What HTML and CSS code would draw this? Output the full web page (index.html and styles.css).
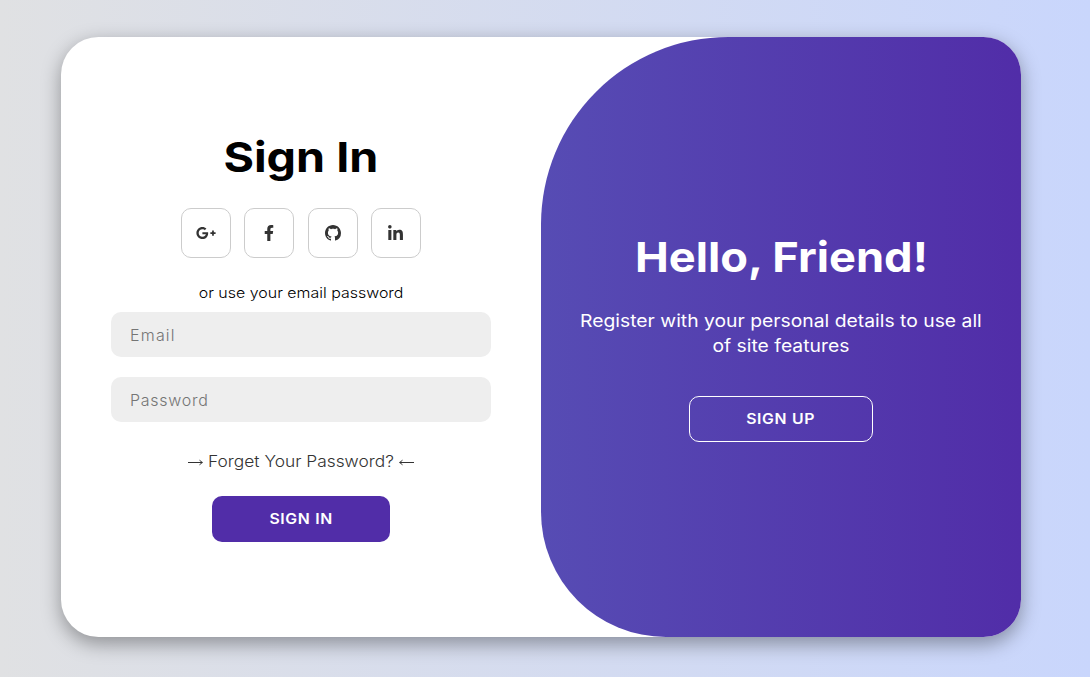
FILE: index.html
```html
<!DOCTYPE html>
<html lang="en">
<head>
<meta charset="utf-8">
<title>Sign In</title>
<link rel="stylesheet" href="styles.css">
</head>
<body>
<main class="card">
  <form class="sign-in">
    <h1 class="title">Sign In</h1>
    <div class="socials">
      <a class="social" aria-label="Google Plus"><svg width="20" height="16" viewBox="0 0 640 512"><path d="M386.061 228.496c1.834 9.692 3.143 19.384 3.143 31.956C389.204 370.205 315.599 448 204.8 448c-106.084 0-192-85.915-192-192s85.916-192 192-192c51.864 0 95.083 18.859 128.611 50.292l-52.126 50.03c-14.145-13.621-39.028-29.599-76.485-29.599-65.484 0-118.92 54.221-118.92 121.277 0 67.056 53.436 121.277 118.92 121.277 75.961 0 104.513-54.745 108.965-82.773H204.8v-66.009h181.261zm185.406 6.437V179.2h-56.001v55.733h-55.733v56.001h55.733v55.733h56.001v-55.733H627.2v-56.001h-55.733z"/></svg></a>
      <a class="social" aria-label="Facebook"><svg width="10" height="16" viewBox="0 0 320 512"><path d="M279.14 288l14.22-92.66h-88.91v-60.13c0-25.35 12.42-50.06 52.24-50.06h40.42V6.26S260.43 0 225.36 0c-73.22 0-121.08 44.38-121.08 124.72v70.62H22.89V288h81.39v224h100.17V288z"/></svg></a>
      <a class="social" aria-label="GitHub"><svg width="16" height="16" viewBox="0 0 16 16"><path d="M8 0C3.58 0 0 3.58 0 8c0 3.54 2.29 6.53 5.47 7.59.4.07.55-.17.55-.38 0-.19-.01-.82-.01-1.49-2.01.37-2.53-.49-2.69-.94-.09-.23-.48-.94-.82-1.13-.28-.15-.68-.52-.01-.53.63-.01 1.08.58 1.23.82.72 1.21 1.87.87 2.33.66.07-.52.28-.87.51-1.07-1.78-.2-3.64-.89-3.64-3.95 0-.87.31-1.59.82-2.15-.08-.2-.36-1.02.08-2.12 0 0 .67-.21 2.2.82.64-.18 1.32-.27 2-.27s1.36.09 2 .27c1.53-1.04 2.2-.82 2.2-.82.44 1.1.16 1.92.08 2.12.51.56.82 1.27.82 2.15 0 3.07-1.87 3.75-3.65 3.95.29.25.54.73.54 1.48 0 1.07-.01 1.93-.01 2.2 0 .21.15.46.55.38A8.01 8.01 0 0 0 16 8c0-4.42-3.58-8-8-8z"/></svg></a>
      <a class="social" aria-label="LinkedIn"><svg width="15" height="17" viewBox="0 0 448 512"><path d="M100.28 448H7.4V148.9h92.88zM53.79 108.1C24.09 108.1 0 83.5 0 53.8a53.79 53.79 0 0 1 107.58 0c0 29.7-24.1 54.3-53.79 54.3zM447.9 448h-92.68V302.4c0-34.7-.7-79.2-48.29-79.2-48.29 0-55.69 37.7-55.69 76.7V448h-92.78V148.9h89.08v40.8h1.3c12.4-23.5 42.69-48.3 87.88-48.3 94 0 111.28 61.9 111.28 142.3V448z"/></svg></a>
    </div>
    <span class="hint">or use your email password</span>
    <input class="field email" type="email" placeholder="Email">
    <input class="field" type="password" placeholder="Password">
    <a class="forgot"><svg width="15" height="8" viewBox="0 0 15 8"><path d="M0 4.5H14.5M11.5 2.2L14.3 4.5L11.5 6.8"/></svg><span class="forgot-text">Forget Your Password?</span><svg width="15" height="8" viewBox="0 0 15 8"><path d="M15 4.5H.5M3.5 2.2L.7 4.5L3.5 6.8"/></svg></a>
    <button class="button" type="button"><span class="label">SIGN IN</span></button>
  </form>
  <section class="welcome">
    <h2 class="greeting">Hello, Friend!</h2>
    <p class="message">Register with your personal details to use all<br>of site features</p>
    <button class="button outline" type="button"><span class="label">SIGN UP</span></button>
  </section>
</main>
</body>
</html>
```
FILE: styles.css
```css
* {
  box-sizing: border-box;
  margin: 0;
  padding: 0;
  font-family: Inter, sans-serif;
}
body {
  height: 677px;
  padding: 37px 0 0 61px;
  overflow: hidden;
  background: linear-gradient(to right, #e0e1e3, #c9d6fc);
}
.card {
  display: flex;
  width: 960px;
  height: 600px;
  overflow: hidden;
  background: #fff;
  border-radius: 37.5px;
  box-shadow: 0 6.25px 18.75px rgba(0, 0, 0, .35);
}
.sign-in, .welcome {
  display: flex;
  flex-direction: column;
  align-items: center;
  width: 480px;
  white-space: nowrap;
}
.sign-in { padding: 94px 50px 0; }
.title, .greeting {
  font-size: 41.5px;
  line-height: 52px;
  font-weight: 700;
}
.title { transform: scaleX(1.125); }
.greeting { transform: scaleX(1.09); }
.socials {
  display: flex;
  gap: 13.33px;
  margin-top: 25px;
}
.social {
  display: flex;
  align-items: center;
  justify-content: center;
  width: 50px;
  height: 50px;
  border: 1px solid #ccc;
  border-radius: 10px;
}
.social svg { fill: #333; }
.hint {
  margin-top: 25px;
  font-size: 14.5px;
  line-height: 20px;
  font-weight: 300;
  transform: scaleX(1.1);
}
.field {
  width: 380px;
  height: 45px;
  margin-top: 9px;
  padding: 1px 19px 0;
  background: #eee;
  border: 0;
  border-radius: 10px;
  font-size: 16px;
  font-weight: 300;
  letter-spacing: .75px;
}
.email { letter-spacing: 1.2px; }
.field + .field { margin-top: 20px; }
.field::placeholder { color: #757575; }
.forgot {
  display: flex;
  align-items: center;
  gap: 15px;
  margin-top: 30px;
  color: #333;
  font-size: 15.5px;
  line-height: 20px;
  font-weight: 300;
}
.forgot-text { transform: scaleX(1.12); }
.forgot svg {
  fill: none;
  stroke: #333;
  stroke-width: 1;
}
.button {
  width: 178px;
  height: 46px;
  margin-top: 24px;
  padding-bottom: 2px;
  color: #fff;
  background: #512da8;
  border: 1px solid transparent;
  border-radius: 10px;
  font-size: 14.5px;
  font-weight: 600;
  letter-spacing: .6px;
}
.label {
  display: inline-block;
  transform: scaleX(1.09);
}
.welcome {
  padding-top: 194px;
  color: #fff;
  background: linear-gradient(to right, #5c6bc0, #512da8) right / 200% 100%;
  border-radius: 187.5px 0 0 125px;
}
.message {
  margin-top: 25px;
  font-size: 17.5px;
  line-height: 25px;
  font-weight: 400;
  text-align: center;
  transform: scaleX(1.104);
}
.button.outline {
  width: 184px;
  margin-top: 38px;
  background: transparent;
  border-color: #fff;
}
```
